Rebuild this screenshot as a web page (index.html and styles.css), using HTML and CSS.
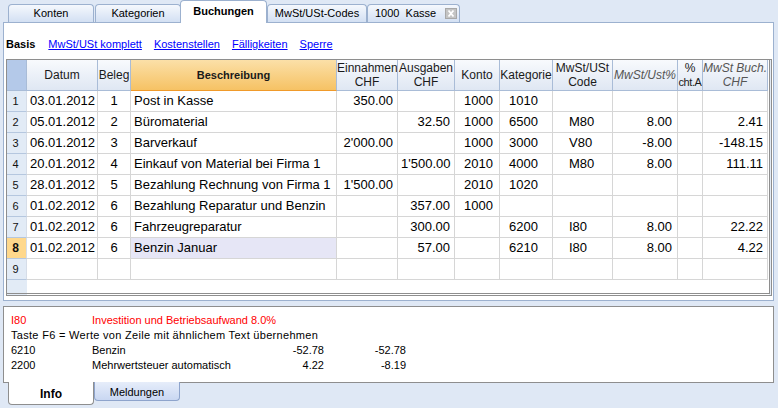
FILE: index.html
```html
<!DOCTYPE html>
<html>
<head>
<meta charset="utf-8">
<link rel="stylesheet" href="styles.css">
</head>
<body>
<div class="tabs">
  <div class="tab t-konten">Konten</div>
  <div class="tab t-kat">Kategorien</div>
  <div class="tab active t-buch">Buchungen</div>
  <div class="tab t-mwst">MwSt/USt-Codes</div>
  <div class="tab t-kasse"><span class="kasse-label">1000&nbsp; Kasse</span>
    <svg class="close" width="12" height="11" viewBox="0 0 12 11"><rect x="0.5" y="0.5" width="11" height="10" fill="#c4c4c4" stroke="#a8a8a8"/><path d="M3.5 2.5 L8.5 8.5 M8.5 2.5 L3.5 8.5" stroke="#fff" stroke-width="1.8"/></svg>
  </div>
</div>
<div class="page">
  <div class="views">
    <b>Basis</b>
    <a href="#">MwSt/USt komplett</a>
    <a href="#">Kostenstellen</a>
    <a href="#">Fälligkeiten</a>
    <a href="#">Sperre</a>
  </div>
  <div class="frame">
    <table class="grid">
      <thead>
        <tr>
          <th class="corner w-n"></th>
          <th class="w-dat">Datum</th>
          <th class="w-bel">Beleg</th>
          <th class="w-bes hl">Beschreibung</th>
          <th class="w-ein">Einnahmen<br>CHF</th>
          <th class="w-aus">Ausgaben<br>CHF</th>
          <th class="w-kto">Konto</th>
          <th class="w-kat">Kategorie</th>
          <th class="w-code">MwSt/USt<br>Code</th>
          <th class="w-pct it">MwSt/Ust%</th>
          <th class="w-pa">%<br><span class="narrow">cht.A</span></th>
          <th class="w-buch it">MwSt Buch.<br>CHF</th>
        </tr>
      </thead>
      <tbody>
        <tr><td class="n">1</td><td>03.01.2012</td><td class="c">1</td><td>Post in Kasse</td><td class="r">350.00</td><td class="r"></td><td class="k">1000</td><td class="k">1010</td><td class="cd"></td><td class="r2"></td><td></td><td class="r"></td></tr>
        <tr><td class="n">2</td><td>05.01.2012</td><td class="c">2</td><td>Büromaterial</td><td class="r"></td><td class="r">32.50</td><td class="k">1000</td><td class="k">6500</td><td class="cd">M80</td><td class="r2">8.00</td><td></td><td class="r">2.41</td></tr>
        <tr><td class="n">3</td><td>06.01.2012</td><td class="c">3</td><td>Barverkauf</td><td class="r">2'000.00</td><td class="r"></td><td class="k">1000</td><td class="k">3000</td><td class="cd">V80</td><td class="r2">-8.00</td><td></td><td class="r">-148.15</td></tr>
        <tr><td class="n">4</td><td>20.01.2012</td><td class="c">4</td><td>Einkauf von Material bei Firma 1</td><td class="r"></td><td class="r">1'500.00</td><td class="k">2010</td><td class="k">4000</td><td class="cd">M80</td><td class="r2">8.00</td><td></td><td class="r">111.11</td></tr>
        <tr><td class="n">5</td><td>28.01.2012</td><td class="c">5</td><td>Bezahlung Rechnung von Firma 1</td><td class="r">1'500.00</td><td class="r"></td><td class="k">2010</td><td class="k">1020</td><td class="cd"></td><td class="r2"></td><td></td><td class="r"></td></tr>
        <tr><td class="n">6</td><td>01.02.2012</td><td class="c">6</td><td>Bezahlung Reparatur und Benzin</td><td class="r"></td><td class="r">357.00</td><td class="k">1000</td><td class="k"></td><td class="cd"></td><td class="r2"></td><td></td><td class="r"></td></tr>
        <tr><td class="n">7</td><td>01.02.2012</td><td class="c">6</td><td>Fahrzeugreparatur</td><td class="r"></td><td class="r">300.00</td><td class="k"></td><td class="k">6200</td><td class="cd">I80</td><td class="r2">8.00</td><td></td><td class="r">22.22</td></tr>
        <tr><td class="n cur">8</td><td>01.02.2012</td><td class="c">6</td><td class="sel">Benzin Januar</td><td class="r"></td><td class="r">57.00</td><td class="k"></td><td class="k">6210</td><td class="cd">I80</td><td class="r2">8.00</td><td></td><td class="r">4.22</td></tr>
        <tr><td class="n">9</td><td></td><td class="c"></td><td></td><td class="r"></td><td class="r"></td><td class="k"></td><td class="k"></td><td class="cd"></td><td class="r2"></td><td></td><td class="r"></td></tr>
      </tbody>
    </table>
  </div>
</div>
<div class="info">
  <div class="line red"><span>I80</span><span class="span3">Investition und Betriebsaufwand 8.0%</span></div>
  <div class="line"><span class="span4 wide">Taste F6 = Werte von Zeile mit ähnlichem Text übernehmen</span></div>
  <div class="line"><span>6210</span><span>Benzin</span><span class="num">-52.78</span><span class="num">-52.78</span></div>
  <div class="line"><span>2200</span><span>Mehrwertsteuer automatisch</span><span class="num">4.22</span><span class="num">-8.19</span></div>
</div>
<div class="btabs">
  <div class="btab bactive">Info</div>
  <div class="btab">Meldungen</div>
</div>
</body>
</html>
```
FILE: styles.css
```css
html, body {
  margin: 0;
  padding: 0;
}
body {
  width: 778px;
  height: 408px;
  overflow: hidden;
  background: #dfe8f5;
  font-family: "Liberation Sans", Arial, sans-serif;
  font-size: 11px;
  color: #000;
}

/* top tabs */
.tabs {
  display: flex;
  align-items: flex-end;
  height: 22px;
  padding-left: 8px;
}
.tab {
  box-sizing: border-box;
  height: 18px;
  border: 1px solid #9cb1cf;
  border-bottom: none;
  border-radius: 4px 4px 0 0;
  background: linear-gradient(#f5f8fd, #d3e0f3);
  display: flex;
  align-items: center;
  justify-content: center;
  color: #000;
  padding-bottom: 1px;
}
.t-konten { width: 86px; }
.t-kat { width: 86px; margin-left: 1px; }
.t-buch { width: 87px; margin-left: -1px; }
.t-mwst { width: 100px; }
.t-kasse { width: 93px; justify-content: flex-start; padding-left: 7px; }
.kasse-label { margin-right: 9px; }
.close { display: block; }
.tab.active {
  height: 23px;
  margin-bottom: -1px;
  background: #fff;
  font-weight: bold;
  position: relative;
  z-index: 2;
  padding-bottom: 3px;
}

/* main page */
.page {
  margin: 0 4px 0 3px;
  height: 277px;
  background: #fff;
  border: 1px solid #9cb1cf;
}
.views {
  display: flex;
  gap: 12px;
  height: 14px;
  line-height: 14px;
  padding: 14px 0 8px 2px;
}
.views b { margin-right: 1px; }
.views a { color: #0000ff; text-decoration: underline; }

.frame {
  margin-left: 2px;
  width: 762px;
  height: 233px;
  border-top: 1px solid #8e8e8e;
  border-left: 1px solid #8e8e8e;
  border-right: 3px double #8e8e8e;
  border-bottom: 3px double #8e8e8e;
  background: linear-gradient(to right, #e2ebf6 20px, #fff 20px);
}
.grid {
  border-collapse: separate;
  border-spacing: 0;
  table-layout: fixed;
  width: 761px;
}
.grid th, .grid td {
  box-sizing: border-box;
  white-space: nowrap;
  overflow: hidden;
  padding: 0 3px;
  border-right: 1px solid #d6d6d6;
  border-bottom: 1px solid #d6d6d6;
}
.grid th {
  height: 31px;
  font-weight: normal;
  font-size: 12px;
  line-height: 14px;
  color: #1a1a1a;
  text-align: center;
  background: linear-gradient(#f8fafd, #dfe7f3);
  border-right: 1px solid #a9bcd7;
  border-bottom: 1px solid #a9bcd7;
  padding: 0;
}
.grid th.corner { background: #b4c9e9; }
.grid th.hl {
  background: linear-gradient(#fbe0a8, #f6c264);
  border-bottom: 1px solid #f09a2a;
  font-weight: bold;
  font-size: 11px;
}
.grid th.it { font-style: italic; color: #555; font-size: 12px; }
.narrow { font-size: 11px; letter-spacing: -0.4px; }

.w-n { width: 20px; }
.w-dat { width: 71px; }
.w-bel { width: 33px; }
.w-bes { width: 206px; }
.w-ein { width: 61px; }
.w-aus { width: 57px; }
.w-kto { width: 45px; }
.w-kat { width: 53px; }
.w-code { width: 60px; }
.w-pct { width: 65px; }
.w-pa { width: 25px; }
.w-buch { width: 65px; }

.grid td {
  height: 21px;
  font-size: 13px;
  line-height: 20px;
}
.grid td.n {
  font-size: 11px;
  text-align: center;
  padding: 0 2px 0 0;
  background: #e2ebf6;
  border-right: 1px solid #d6dde8;
  border-bottom: 1px solid #b5c7df;
  color: #111;
}
.grid td.n.cur { background: #ffd88c; font-weight: bold; font-size: 12px; }
.grid td.c { text-align: center; }
.grid td.r { text-align: right; padding-right: 4px; }
.grid td.r2 { text-align: right; padding-right: 5px; }
.grid td.k { padding-left: 9px; }
.grid td.cd { padding-left: 16px; }
.grid td.sel { background: #e6e6f6; }

/* info panel */
.info {
  box-sizing: border-box;
  margin: 5px 4px 0 3px;
  height: 77px;
  border: 1px solid #8e8e8e;
  background: #fff;
  padding: 6px 0 0 7px;
}
.line {
  display: grid;
  grid-template-columns: 81px 172px 60px 82px;
  height: 15px;
  line-height: 15px;
  white-space: nowrap;
}
.line.red { color: #ff0000; }
.span3 { grid-column: 2 / 5; }
.span4 { grid-column: 1 / 5; }
.wide { letter-spacing: 0.3px; }
.num { text-align: right; }

/* bottom tabs */
.btabs {
  display: flex;
  align-items: flex-start;
  padding-left: 8px;
  margin-top: -1px;
}
.btab {
  box-sizing: border-box;
  height: 19px;
  width: 86px;
  border: 1px solid #8ea4cc;
  border-top: none;
  border-radius: 0 0 4px 4px;
  background: linear-gradient(#e6edfa, #c9d7f2);
  display: flex;
  align-items: center;
  justify-content: center;
  padding-top: 1px;
}
.btab.bactive {
  height: 23px;
  width: 86px;
  background: #fff;
  border-color: #8e8e8e;
  font-weight: bold;
  font-size: 12px;
  position: relative;
  z-index: 2;
}
```
